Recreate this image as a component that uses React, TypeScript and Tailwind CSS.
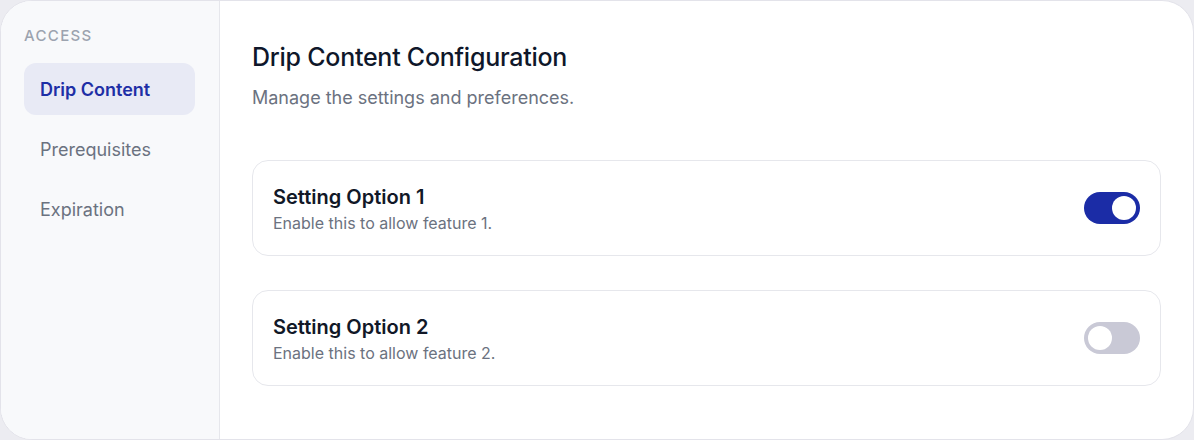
import React, { useState } from "react"

const navItems = ["Drip Content", "Prerequisites", "Expiration"]

const Toggle = ({ on, onClick }: { on: boolean; onClick: () => void }) => (
  <button
    onClick={onClick}
    className={`relative flex h-8 w-14 shrink-0 items-center rounded-full px-1 transition-colors ${
      on ? "bg-[#1b2ca6]" : "bg-[#c9c9d6]"
    }`}
  >
    <span
      className={`h-6 w-6 rounded-full bg-white transition-transform ${
        on ? "translate-x-6" : "translate-x-0"
      }`}
    />
  </button>
)

const SettingCard = ({
  title,
  desc,
  on,
  onToggle,
}: {
  title: string
  desc: string
  on: boolean
  onToggle: () => void
}) => (
  <div className="flex h-[96px] items-center justify-between rounded-2xl border-[1.5px] border-[#e6e7ec] bg-white px-5">
    <div className="flex flex-col">
      <div className="text-[20px] font-semibold leading-[26px] text-[#111827]">
        {title}
      </div>
      <div className="mt-[3px] text-[16px] leading-5 text-[#6b7280]">{desc}</div>
    </div>
    <Toggle on={on} onClick={onToggle} />
  </div>
)

export default function App() {
  const [active, setActive] = useState(0)
  const [opts, setOpts] = useState([true, false])

  return (
    <div
      className="h-[440px] w-[1194px] bg-[#ececf1]"
      style={{ fontFamily: "Inter, 'Noto Sans', sans-serif" }}
    >
      <div className="flex h-full w-full overflow-hidden rounded-[32px] border border-[#e3e3ea] bg-white">
        <aside className="flex w-[219px] shrink-0 flex-col border-r border-[#e6e7ec] bg-[#f8f9fb] pl-[23px] pr-6 pt-[25px]">
          <div className="mb-[17px] text-[15px] font-medium uppercase leading-5 tracking-[0.09em] text-[#9ca3af]">
            Access
          </div>
          <nav className="flex flex-col gap-2">
            {navItems.map((item, i) => (
              <button
                key={item}
                onClick={() => setActive(i)}
                className={`flex h-[52px] items-center rounded-xl px-4 text-left text-[18px] ${
                  active === i
                    ? "bg-[#e8eaf5] font-semibold text-[#1e2fa6]"
                    : "text-[#6b7280]"
                }`}
              >
                {item}
              </button>
            ))}
          </nav>
        </aside>
        <main className="flex flex-1 flex-col px-8 pt-[41px]">
          <h1 className="text-[25px] font-medium leading-[30px] tracking-[-0.01em] text-[#0f172a]">
            Drip Content Configuration
          </h1>
          <p className="mt-[14px] text-[18px] leading-6 text-[#6b7280]">
            Manage the settings and preferences.
          </p>
          <div className="mt-[50px] flex flex-col gap-[34px]">
            {[1, 2].map((n, i) => (
              <SettingCard
                key={n}
                title={`Setting Option ${n}`}
                desc={`Enable this to allow feature ${n}.`}
                on={opts[i]}
                onToggle={() =>
                  setOpts(opts.map((v, j) => (j === i ? !v : v)))
                }
              />
            ))}
          </div>
        </main>
      </div>
    </div>
  )
}
